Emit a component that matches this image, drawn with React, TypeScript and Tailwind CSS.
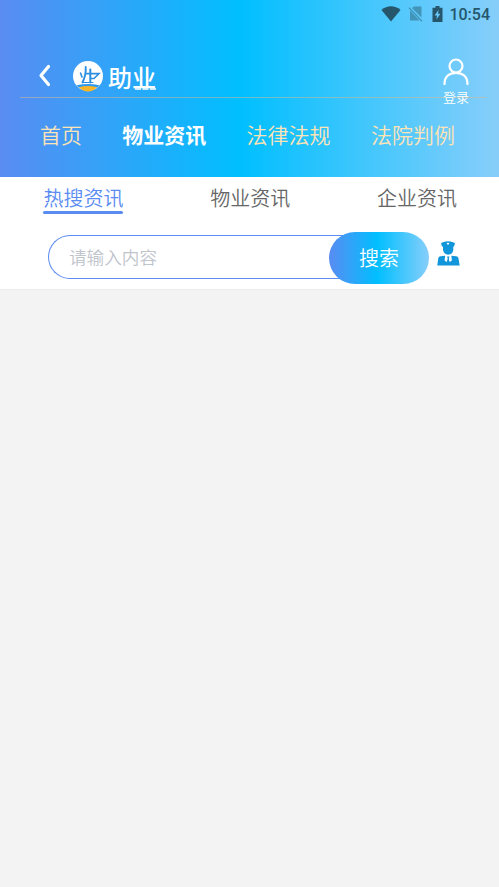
const navItems = ['首页', '物业资讯', '法律法规', '法院判例'];
const tabs = ['热搜资讯', '物业资讯', '企业资讯'];

function StatusBar() {
    return (
        <div className="flex h-7 items-center justify-end pr-[9px] text-[#25566b]">
            <svg className="mr-[7px] h-4 w-5" viewBox="0 0 20 16" fill="currentColor">
                <path d="M0.5 4C6-1 14-1 19.5 4L10 15.5Z" />
            </svg>
            <svg className="mr-[9px] h-4 w-[15px] opacity-45" viewBox="0 0 15 16" fill="currentColor">
                <path d="M6 0.5H13.5V11.6L4 2.1ZM2 4.5L11.5 14.5H2Z" />
                <path d="M1 1.8L14 15.2" fill="none" stroke="currentColor" strokeWidth="1.3" />
            </svg>
            <svg className="mr-[6px] h-4 w-[11px]" viewBox="0 0 11 16">
                <path d="M3.5 0H7.5V1.8H10.5V16H0.5V1.8H3.5Z" fill="currentColor" />
                <path d="M6.6 3.8L2.6 9.6H5L4.4 13.5L8.4 7.8H6Z" fill="#69c8fa" />
            </svg>
            <span className="pt-px font-['Roboto',sans-serif] text-base font-medium leading-none">10:54</span>
        </div>
    );
}

function Logo() {
    return (
        <div className="flex items-center">
            <svg className="h-[31px] w-[30px]" viewBox="0 0 30 31">
                <circle cx="15" cy="15" r="15" fill="white" />
                <path d="M3.5 24.2Q15 22 26.5 24.2L24.3 26.6H5.7Z" fill="#2f9bf0" />
                <path d="M6 26.2Q15 23.8 24 26.2Q20 30.5 15 30.5T6 26.2Z" fill="#f9b528" />
                <g fill="none" stroke="#2e8fe0" strokeLinecap="round">
                    <path d="M12.7 6Q13.2 14 9.5 21.5" strokeWidth="1.9" />
                    <path d="M17.3 8.5V21.5" strokeWidth="2" />
                    <path d="M7.5 12L9 16" strokeWidth="1.6" />
                    <path d="M13.5 12.6H26L21 17.5H18" strokeWidth="1.6" />
                    <path d="M10 21.5H20" strokeWidth="1.2" />
                </g>
            </svg>
            <div className="ml-[5px] flex flex-col items-end">
                <span className="-mt-px font-['Noto_Sans_CJK_SC',sans-serif] text-2xl leading-7 font-medium text-white">助业</span>
                <div className="-mt-[3px] w-[21px] border-b-2 border-dashed border-white/75" />
            </div>
        </div>
    );
}

function OfficerIcon() {
    return (
        <svg className="h-[25px] w-[23px]" viewBox="0 0 23 25" fill="#1296db">
            <path d="M4 2.5Q6 0.4 11 0.2Q16 0.4 18 2.5L17 5.5H5Z" />
            <path d="M6 5H16.3V9Q15.5 13.4 11.2 13.8Q7 13.4 6 9Z" />
            <path d="M11 1.5L12.4 2.6L11 4.1L9.6 2.6Z" fill="white" />
            <path d="M0.3 24.6L1.3 17Q1.7 15.3 3.5 15.3L8 14.8L11.2 16L14.4 14.8L19.2 15.3Q20.9 15.3 21.4 17L22.7 24.6Z" />
            <path d="M8.2 14.5H14.3L14.9 19.5L12.7 21L11.2 17L9.7 21L7.6 19.5Z" fill="white" />
            <path d="M10 15.5H12.5L11.8 17.5L12.1 21L11.2 22L10.4 21L10.7 17.5Z" />
        </svg>
    );
}

export default function App() {
    return (
        <div className="min-h-screen bg-[#f3f3f3] font-['Noto_Sans_CJK_SC',sans-serif] font-[350]">
            <header className="h-[177px] bg-[linear-gradient(90deg,#5a8cf2_0%,#00bfff_48%,#87cefa_100%)]">
                <StatusBar />
                <div className="mr-[13px] ml-5 flex h-[70px] items-end justify-between border-b border-[#deb887]/50">
                    <div className="flex items-center pb-[5px] pl-[18px]">
                        <svg className="mr-[22px] mb-[3px] h-[23px] w-[13px]" viewBox="0 0 13 23" fill="none" stroke="white" strokeWidth="3.2" strokeLinecap="round" strokeLinejoin="round">
                            <path d="M10.5 2.5L3 11.5L10.5 20.5" />
                        </svg>
                        <Logo />
                    </div>
                    <div className="mr-[17px] -mb-[9px] flex flex-col items-center text-white">
                        <svg className="h-7 w-[26px]" viewBox="0 0 26 28" fill="none" stroke="currentColor" strokeWidth="2.2" strokeLinecap="round">
                            <circle cx="13" cy="9" r="6.5" />
                            <path d="M1.5 27C1.5 19.5 6.5 15.8 13 15.8S24.5 19.5 24.5 27" />
                        </svg>
                        <span className="mt-[3px] text-[13px] leading-[18px]">登录</span>
                    </div>
                </div>
                <nav className="flex gap-[40.3px] pt-[21px] pl-[40px] text-[21px] leading-[30px]">
                    {navItems.map((item, i) => (
                        <span key={item} className={i === 1 ? 'font-bold text-white' : 'text-[#ffe4b5]'}>
                            {item}
                        </span>
                    ))}
                </nav>
            </header>

            <section className="h-[113px] border-b border-[#ececec] bg-white">
                <div className="flex justify-between pr-[42px] pl-[43.4px] text-xl text-[#666]">
                    {tabs.map((tab, i) => (
                        <div key={tab} className="flex flex-col items-center pt-2">
                            <span className={i === 0 ? 'leading-[26px] text-[#5a8cf2]' : 'leading-[26px]'}>{tab}</span>
                            {i === 0 && <div className="h-[3px] w-20 rounded-full bg-[#5a8cf2]" />}
                        </div>
                    ))}
                </div>
                <div className="mt-[18px] flex items-center pl-12">
                    <div className="-mr-5 mb-[2px] flex h-[44px] w-[301px] items-center rounded-l-full border border-r-0 border-[#5a8cf2] pl-5 text-[17.6px] text-[#c0c4cc]">
                        请输入内容
                    </div>
                    <button className="h-[52px] w-[100px] rounded-full bg-[linear-gradient(90deg,#5a8cf2_0%,#00bfff_48%,#87cefa_100%)] text-xl text-white">
                        搜索
                    </button>
                    <div className="mb-[9px] ml-2">
                        <OfficerIcon />
                    </div>
                </div>
            </section>
        </div>
    );
}
